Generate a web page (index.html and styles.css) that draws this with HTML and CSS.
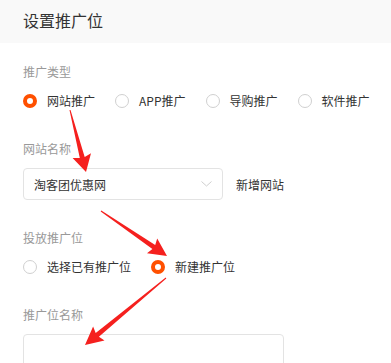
FILE: index.html
```html
<!DOCTYPE html>
<html lang="zh-CN">
<head>
    <meta charset="UTF-8">
    <meta name="viewport" content="width=device-width, initial-scale=1.0">
    <title>设置推广位</title>
    <link rel="stylesheet" href="styles.css">
</head>
<body>
    <div class="panel">
        <div class="panel-header">设置推广位</div>

        <div class="panel-body">
            <div class="field first">
                <div class="field-label">推广类型</div>
                <div class="radio-group">
                    <label class="radio-item"><span class="radio checked"></span>网站推广</label>
                    <label class="radio-item"><span class="radio"></span>APP推广</label>
                    <label class="radio-item"><span class="radio"></span>导购推广</label>
                    <label class="radio-item"><span class="radio"></span>软件推广</label>
                </div>
            </div>

            <div class="field">
                <div class="field-label">网站名称</div>
                <div class="select-row">
                    <div class="select">
                        <span>淘客团优惠网</span>
                        <svg class="chevron" width="11" height="6" viewBox="0 0 11 6">
                            <polyline points="0.5,0.5 5.5,5 10.5,0.5" fill="none" stroke="#cfcfcf" stroke-width="1"/>
                        </svg>
                    </div>
                    <a class="add-link">新增网站</a>
                </div>
            </div>

            <div class="field">
                <div class="field-label">投放推广位</div>
                <div class="radio-group">
                    <label class="radio-item"><span class="radio"></span>选择已有推广位</label>
                    <label class="radio-item"><span class="radio checked"></span>新建推广位</label>
                </div>
            </div>

            <div class="field">
                <div class="field-label">推广位名称</div>
                <div class="text-input"></div>
            </div>
        </div>
    </div>

    <!-- annotation arrows drawn over the form -->
    <svg class="annotations" width="391" height="363" viewBox="0 0 391 363">
        <polygon points="69.5,110.1 79.8,158.1 72.6,158.0 86,172 91.0,153.2 84.7,156.9 70.5,109.9"/>
        <polygon points="100.7,211.4 152.4,249.1 147.0,253.3 167,256 157.2,238.5 155.2,244.9 101.3,210.6"/>
        <polygon points="165.7,277.6 95.7,332.9 93.1,326.6 85,345 104.5,340.4 98.9,336.7 166.3,278.4"/>
    </svg>
</body>
</html>
```

FILE: styles.css
```css
body {
    margin: 0;
    font-family: "Noto Sans CJK SC", "Noto Sans", sans-serif;
    font-size: 12px;
    color: #333;
    background-color: #fff;
    position: relative;
    overflow: hidden;
}

.panel-header {
    height: 43px;
    line-height: 41px;
    padding-left: 23px;
    background-color: #f9f9f9;
    font-size: 16px;
    color: #333;
}

.panel-body {
    padding: 0 23px;
}

.field {
    margin-top: 28px;
}

.field.first {
    margin-top: 19px;
}

.field-label {
    height: 20px;
    line-height: 20px;
    margin-bottom: 9px;
    color: #999;
}

.radio-group {
    display: flex;
    gap: 20px;
    height: 20px;
    white-space: nowrap;
}

.radio-item {
    display: flex;
    flex-shrink: 0;
    align-items: center;
    line-height: 20px;
    cursor: pointer;
}

.radio {
    box-sizing: border-box;
    width: 14px;
    height: 14px;
    margin-right: 10px;
    border: 1px solid #d0d0d0;
    border-radius: 50%;
    background-color: #fff;
}

.radio.checked {
    border: 4px solid #ff5000;
}

.select-row {
    display: flex;
    align-items: center;
}

.select {
    box-sizing: border-box;
    width: 200px;
    height: 32px;
    padding: 0 10px 0 10px;
    border: 1px solid #e3e3e3;
    border-radius: 4px;
    display: flex;
    align-items: center;
    justify-content: space-between;
}

.add-link {
    margin-left: 13px;
    color: #333;
    cursor: pointer;
}

.text-input {
    box-sizing: border-box;
    width: 261px;
    height: 40px;
    border: 1px solid #e3e3e3;
    border-radius: 4px;
}

.annotations {
    position: absolute;
    top: 0;
    left: 0;
    pointer-events: none;
    fill: #f5201e;
}
```
